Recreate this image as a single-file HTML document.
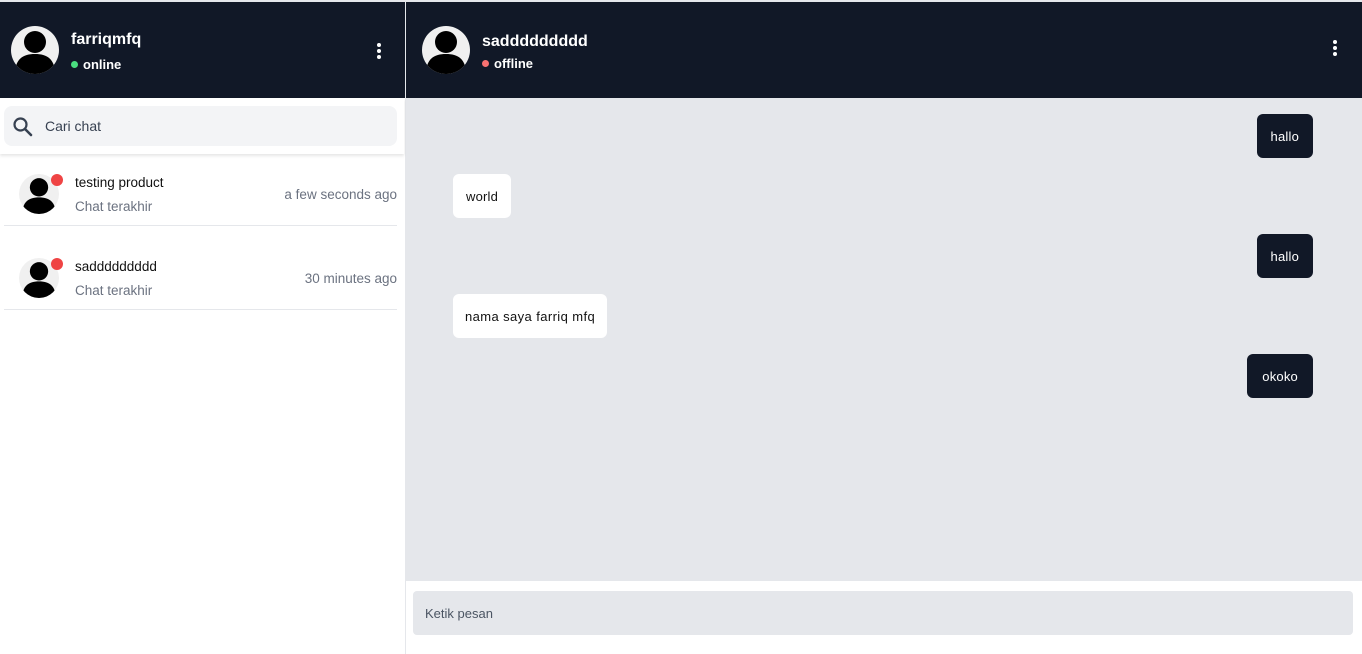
<!DOCTYPE html><html><head><style>
*{margin:0;padding:0;box-sizing:border-box}
body{width:1362px;height:654px;background:#fff;font-family:"Liberation Sans","DejaVu Sans",sans-serif;position:relative;overflow:hidden}
.abs{position:absolute}
.hdr{background:#111827;top:2px;height:96px}
.av{border-radius:50%;background:#f0f0f0;overflow:hidden}
.av svg{display:block}
.dots i{display:block;width:4px;height:4px;border-radius:50%;background:#fff;margin-bottom:2px}
.bub{border-radius:6px;font-size:13px;padding:0 14px;height:44px;line-height:46px;letter-spacing:.2px}
.dk{background:#111827;color:#fff}
.wt{background:#fff;color:#111}
</style></head><body>
<div class="abs" style="top:0;left:0;width:1362px;height:2px;background:#e5e7eb"></div>
<div class="abs hdr" style="left:0;width:405px"></div>
<div class="abs" style="left:405px;top:0;width:1px;height:654px;background:#e5e7eb"></div>
<div class="abs hdr" style="left:406px;width:956px"></div>

<svg width="0" height="0" style="position:absolute"><defs><symbol id="p" viewBox="0 0 48 48"><circle cx="24" cy="16" r="11" fill="#000"/><path d="M4 48 C4 33 12 28 24 28 C36 28 44 33 44 48Z" fill="#000"/></symbol></defs></svg>

<div class="abs av" style="left:11px;top:26px;width:48px;height:48px"><svg width="48" height="48"><use href="#p"/></svg></div>
<div class="abs" style="left:71px;top:31px;color:#fff;font-weight:bold;font-size:16px">farriqmfq</div>
<div class="abs" style="left:71px;top:57px;color:#fff;font-weight:bold;font-size:13px"><span style="display:inline-block;width:7px;height:7px;border-radius:50%;background:#4ade80;margin-right:5px;vertical-align:1px"></span>online</div>
<div class="abs dots" style="left:377px;top:43px"><i></i><i></i><i></i></div>

<div class="abs av" style="left:422px;top:26px;width:48px;height:48px"><svg width="48" height="48"><use href="#p"/></svg></div>
<div class="abs" style="left:482px;top:33px;color:#fff;font-weight:bold;font-size:16px">saddddddddd</div>
<div class="abs" style="left:482px;top:56px;color:#fff;font-weight:bold;font-size:13px"><span style="display:inline-block;width:7px;height:7px;border-radius:50%;background:#f87171;margin-right:5px;vertical-align:1px"></span>offline</div>
<div class="abs dots" style="left:1333px;top:40px"><i></i><i></i><i></i></div>

<div class="abs" style="left:0;top:98px;width:404px;height:56px;box-shadow:0 2px 3px rgba(0,0,0,.1)"></div>
<div class="abs" style="left:4px;top:106px;width:393px;height:40px;background:#f3f4f6;border-radius:8px"></div>
<svg class="abs" style="left:12px;top:116px" width="22" height="22" viewBox="0 0 22 22"><circle cx="8.5" cy="8.5" r="6" fill="none" stroke="#374151" stroke-width="2.2"/><path d="M13 13l6 6" stroke="#374151" stroke-width="2.6" stroke-linecap="round"/></svg>
<div class="abs" style="left:45px;top:118px;font-size:14px;color:#374151">Cari chat</div>

<div class="abs av" style="left:19px;top:174px;width:40px;height:40px"><svg width="40" height="40"><use href="#p"/></svg></div>
<div class="abs" style="left:51px;top:174px;width:12px;height:12px;border-radius:50%;background:#ef4444"></div>
<div class="abs" style="left:75px;top:175px;font-size:13.5px;color:#111">testing product</div>
<div class="abs" style="left:75px;top:199px;font-size:13.5px;color:#6b7280">Chat terakhir</div>
<div class="abs" style="right:965px;top:187px;font-size:13.5px;color:#6b7280">a few seconds ago</div>
<div class="abs" style="left:4px;top:225px;width:393px;height:1px;background:#e5e7eb"></div>

<div class="abs av" style="left:19px;top:258px;width:40px;height:40px"><svg width="40" height="40"><use href="#p"/></svg></div>
<div class="abs" style="left:51px;top:258px;width:12px;height:12px;border-radius:50%;background:#ef4444"></div>
<div class="abs" style="left:75px;top:259px;font-size:13.5px;color:#111">saddddddddd</div>
<div class="abs" style="left:75px;top:283px;font-size:13.5px;color:#6b7280">Chat terakhir</div>
<div class="abs" style="right:965px;top:271px;font-size:13.5px;color:#6b7280">30 minutes ago</div>
<div class="abs" style="left:4px;top:309px;width:393px;height:1px;background:#e5e7eb"></div>

<div class="abs" style="left:406px;top:98px;width:956px;height:483px;background:#e5e7eb"></div>
<div class="abs bub dk" style="right:49px;top:114px">hallo</div>
<div class="abs bub wt" style="left:453px;top:174px;padding:0 13px">world</div>
<div class="abs bub wt" style="left:453px;top:294px;padding:0 12px;letter-spacing:.4px">nama saya farriq mfq</div>
<div class="abs bub dk" style="right:49px;top:234px">hallo</div>
<div class="abs bub dk" style="right:49px;top:354px;padding:0 15px">okoko</div>

<div class="abs" style="left:413px;top:591px;width:940px;height:44px;background:#e5e7eb;border-radius:4px;font-size:13px;color:#4b5563;line-height:46px;padding-left:12px">Ketik pesan</div>
</body></html>
